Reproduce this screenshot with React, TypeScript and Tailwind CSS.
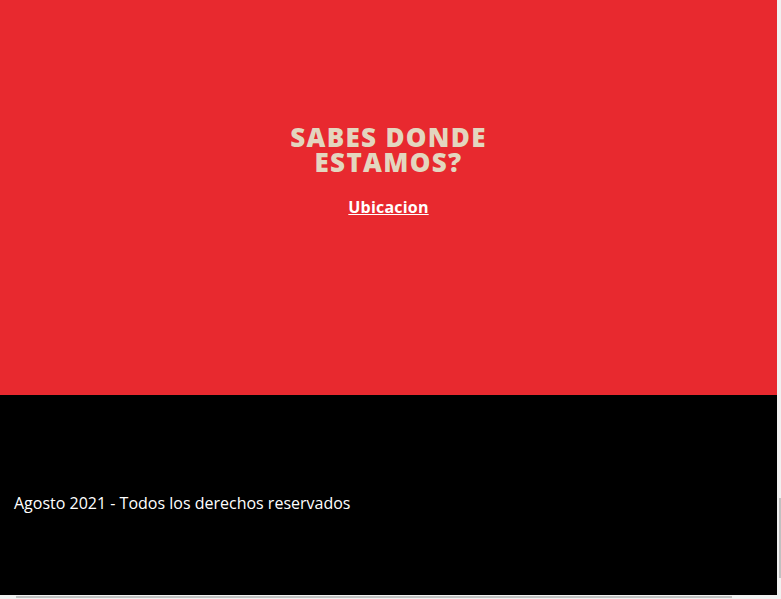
export default function App() {
  return (
    <div className="relative w-[781px] h-[599px] overflow-hidden bg-[#f1f1f1]" style={{ fontFamily: '"Open Sans", sans-serif' }}>
      <div className="w-[777px] h-[595px] flex flex-col">
        <section className="h-[395px] bg-[#e8292f] flex flex-col items-center pt-[125px]">
          <h2 className="text-[26px] leading-[25px] font-extrabold tracking-[1.3px] text-[#e3d6bf] text-center w-[230px]">
            SABES DONDE ESTAMOS?
          </h2>
          <a href="#" className="mt-[21px] text-[16px] leading-[22px] font-bold tracking-[0.2px] text-white underline">
            Ubicacion
          </a>
        </section>
        <footer className="h-[200px] bg-black flex items-start pt-[97px] px-[14px]">
          <p className="text-[16px] leading-[22px] text-white">Agosto 2021 - Todos los derechos reservados</p>
        </footer>
      </div>
      <div className="absolute right-0 top-0 w-[4px] h-[595px] bg-[#f1f1f1]">
        <div className="absolute left-[2px] top-[498px] w-[2px] h-[80px] bg-[#c1c1c1]" />
      </div>
      <div className="absolute left-0 bottom-0 w-[781px] h-[4px] bg-[#f1f1f1]">
        <div className="absolute left-[16px] top-[1px] w-[716px] h-[2px] bg-[#c1c1c1]" />
      </div>
    </div>
  );
}
